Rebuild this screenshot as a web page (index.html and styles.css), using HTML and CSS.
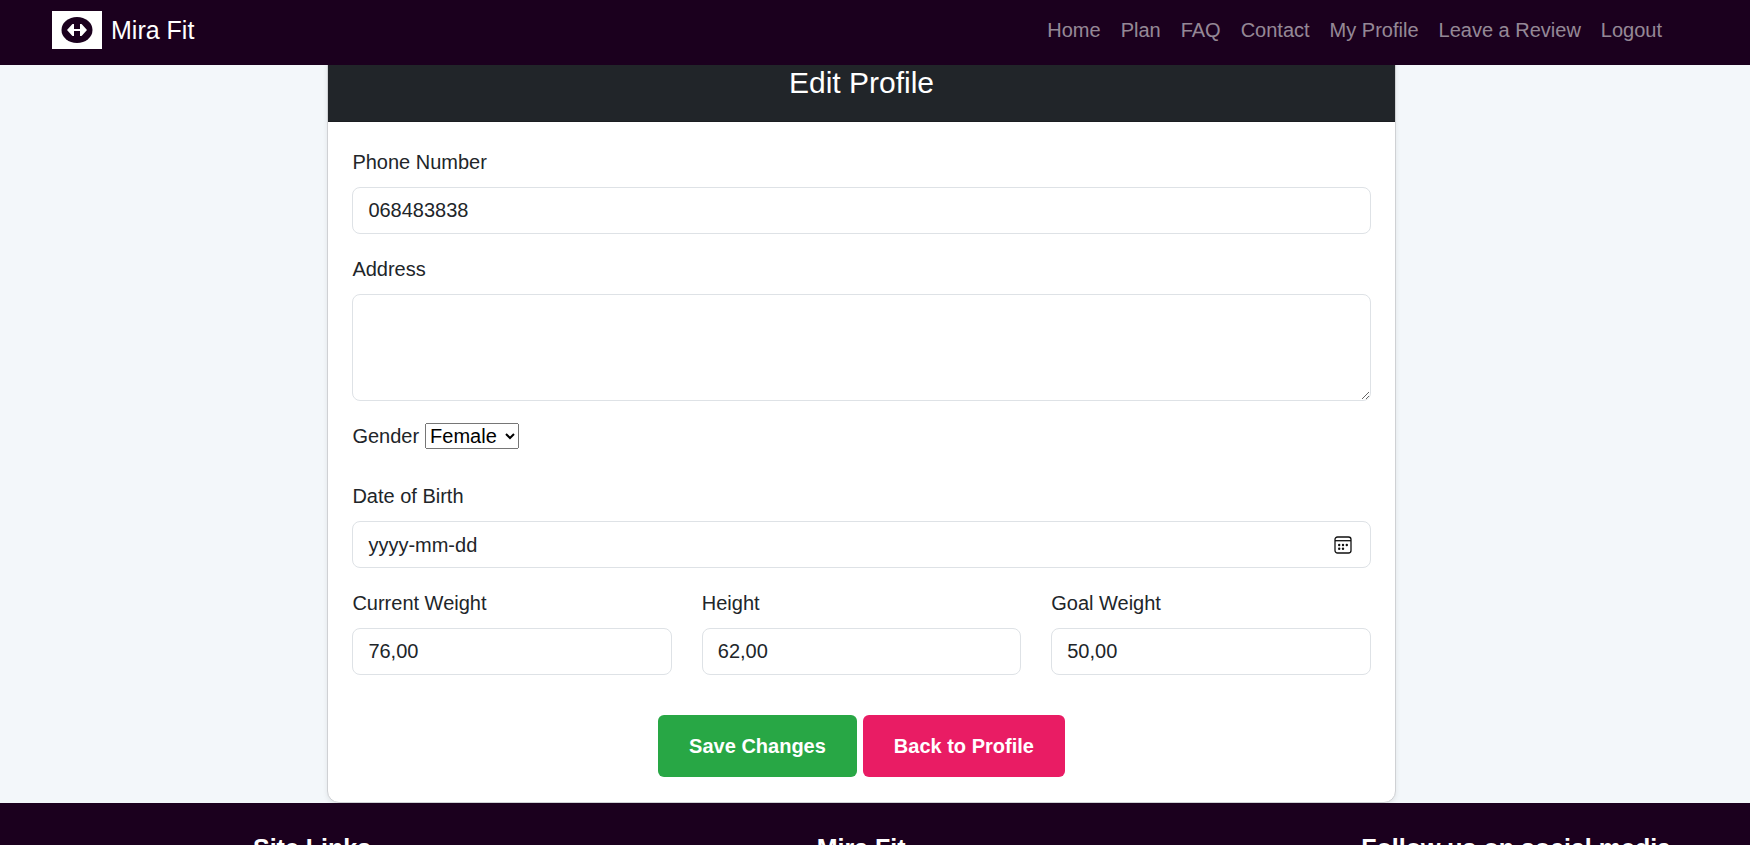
FILE: index.html
```html
<!DOCTYPE html>
<html lang="en">
<head>
  <meta charset="utf-8">
  <meta name="viewport" content="width=device-width, initial-scale=1">
  <title>Mira Fit - Edit Profile</title>
  <link rel="stylesheet" href="styles.css">
</head>
<body>
  <header class="navbar">
    <a class="brand" href="#">
      <svg class="brand-logo" viewBox="0 0 50 38" aria-hidden="true">
        <rect width="50" height="38" fill="#fff"/>
        <ellipse cx="25" cy="19" rx="15.5" ry="13" fill="#1b001e"/>
        <path d="M15 19l4.500-5 1-1h1.500v5h6v-5h1.500l1 1 4.500 5-4.500 5-1 1H28v-5h-6v5h-1.500l-1-1z" fill="#fff"/>
      </svg>
      <span>Mira Fit</span>
    </a>
    <nav class="nav-links" aria-label="Main">
      <a href="#">Home</a>
      <a href="#">Plan</a>
      <a href="#">FAQ</a>
      <a href="#">Contact</a>
      <a href="#">My Profile</a>
      <a href="#">Leave a Review</a>
      <a href="#">Logout</a>
    </nav>
  </header>

  <main class="page">
    <section class="card">
      <h1 class="card-header">Edit Profile</h1>
      <form class="card-body">
        <div class="field">
          <label for="phone">Phone Number</label>
          <input class="control" id="phone" type="tel" value="068483838">
        </div>
        <div class="field">
          <label for="address">Address</label>
          <textarea class="control" id="address" rows="3"></textarea>
        </div>
        <div class="field-inline">
          <label for="gender">Gender</label>
          <select class="gender" id="gender">
            <option>Female</option>
            <option>Male</option>
          </select>
        </div>
        <div class="field">
          <label for="birth">Date of Birth</label>
          <div class="control date">
            <input class="date-input" id="birth" type="text" placeholder="yyyy-mm-dd">
            <button class="date-button" type="button" aria-label="Show date picker">
              <svg class="date-icon" viewBox="0 0 18 18" aria-hidden="true">
                <rect x="1" y="1" width="16" height="16" rx="2.500" fill="none" stroke="#111" stroke-width="1.300"/>
                <path d="M1 4.700h16" stroke="#111" stroke-width="1.300"/>
                <g fill="#111">
                  <circle cx="5.200" cy="9" r="1.200"/>
                  <circle cx="9" cy="9" r="1.200"/>
                  <circle cx="12.800" cy="9" r="1.200"/>
                  <circle cx="5.200" cy="12.700" r="1.200"/>
                  <circle cx="9" cy="12.700" r="1.200"/>
                </g>
              </svg>
            </button>
          </div>
        </div>
        <div class="measures">
          <div class="field">
            <label for="weight">Current Weight</label>
            <input class="control" id="weight" type="text" inputmode="decimal" value="76,00">
          </div>
          <div class="field">
            <label for="height">Height</label>
            <input class="control" id="height" type="text" inputmode="decimal" value="62,00">
          </div>
          <div class="field">
            <label for="goal">Goal Weight</label>
            <input class="control" id="goal" type="text" inputmode="decimal" value="50,00">
          </div>
        </div>
        <div class="actions">
          <button class="button save" type="submit">Save Changes</button>
          <a class="button back" href="#">Back to Profile</a>
        </div>
      </form>
    </section>
  </main>

  <footer class="footer">
    <h2>Site Links</h2>
    <h2 class="footer-brand">Mira Fit</h2>
    <h2>Follow us on social media</h2>
  </footer>
</body>
</html>
```
FILE: styles.css
```css
* {
  box-sizing: border-box;
}

body {
  margin: 0;
  height: 100vh;
  overflow: hidden;
  background: #f3f7fa;
  color: #212529;
  font: 20px/30px "Liberation Sans", Arial, sans-serif;
}

.navbar {
  position: fixed;
  top: 0;
  left: 0;
  right: 0;
  z-index: 10;
  display: flex;
  align-items: center;
  justify-content: space-between;
  padding: 11px 88px 16px 52px;
  background: #1b001e;
}

.brand {
  display: flex;
  align-items: center;
  gap: 9px;
  color: #fff;
  font-size: 25px;
  text-decoration: none;
}

.brand-logo {
  width: 50px;
  height: 38px;
}

.nav-links {
  display: flex;
  gap: 20px;
}

.nav-links a {
  color: rgba(255, 255, 255, 0.55);
  text-decoration: none;
}

.page {
  padding: 52px 27px 0 0;
}

.card {
  width: 62%;
  margin: 0 auto;
  background: #fff;
  border: 1px solid #cfd1d4;
  border-radius: 12px;
  box-shadow: 0 2px 5px rgba(0, 0, 0, 0.08);
}

.card-header {
  margin: 0;
  padding: 12px 20px 20px;
  border-bottom: 1px solid #1b1d21;
  border-radius: 11px 11px 0 0;
  background: #212529;
  color: #fff;
  font-size: 30px;
  font-weight: 400;
  line-height: 36px;
  text-align: center;
}

.card-body {
  display: flex;
  flex-direction: column;
  gap: 20px;
  padding: 25px 24px;
}

.field {
  display: flex;
  flex-direction: column;
  gap: 10px;
}

.control {
  width: 100%;
  height: 47px;
  padding: 7px 15px;
  border: 1px solid #dee2e6;
  border-radius: 8px;
  background: #fff;
  color: #212529;
  font: inherit;
}

textarea.control {
  height: 107px;
  resize: vertical;
}

.field-inline {
  display: flex;
  align-items: center;
  gap: 6px;
  margin-bottom: 10px;
}

.gender {
  width: 94px;
  height: 26px;
  font: inherit;
}

.date {
  display: flex;
  align-items: center;
  justify-content: space-between;
}

.date-input {
  flex: 1;
  min-width: 0;
  padding: 0;
  border: 0;
  outline: 0;
  color: inherit;
  font: inherit;
}

.date-input::placeholder {
  color: #212529;
  opacity: 1;
}

.date-button {
  display: flex;
  padding: 0 3px;
  border: 0;
  background: none;
}

.date-icon {
  width: 18px;
  height: 18px;
}

.measures {
  display: grid;
  grid-template-columns: repeat(3, 1fr);
  gap: 30px;
}

.actions {
  display: flex;
  justify-content: center;
  gap: 6px;
  margin-top: 20px;
}

.button {
  padding: 16px 31px;
  border: 0;
  border-radius: 6px;
  color: #fff;
  font: inherit;
  font-weight: 700;
  text-decoration: none;
}

.save {
  background: #28a745;
}

.back {
  background: #e91c64;
}

.footer {
  display: flex;
  justify-content: space-between;
  padding: 30px 79px 30px 253px;
  background: #1b001e;
  color: #fff;
}

.footer h2 {
  margin: 0;
  font-size: 25px;
  line-height: 30px;
}

.footer .footer-brand {
  margin-right: 10px;
}
```
